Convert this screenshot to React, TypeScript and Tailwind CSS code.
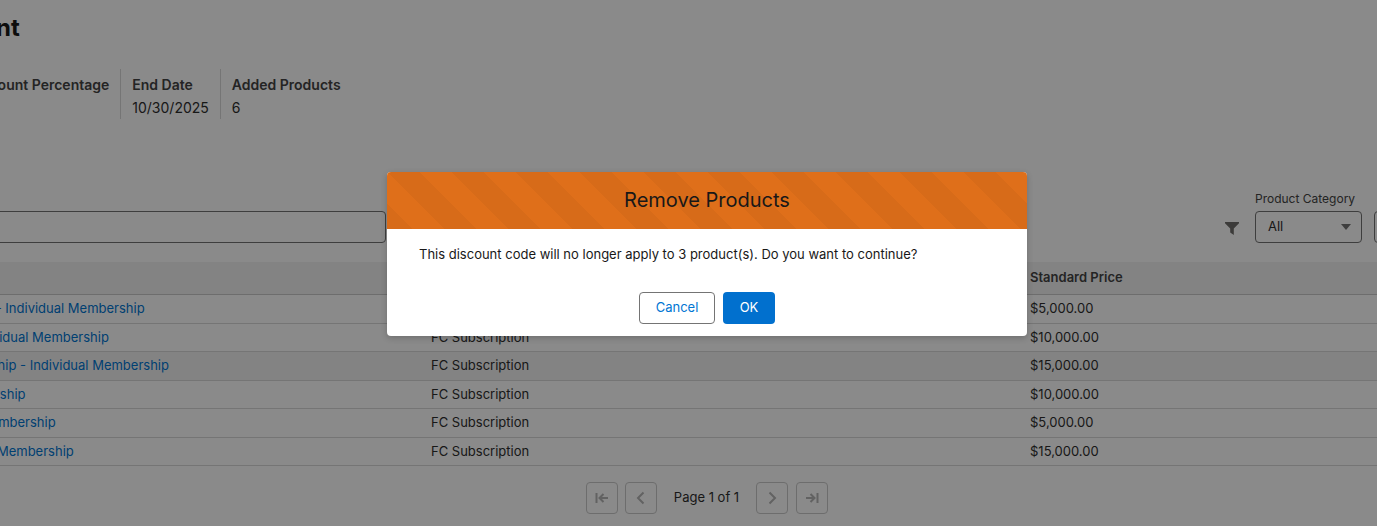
const rows = [
  ["Gold Membership - Individual Membership", "FC Subscription", "$5,000.00"],
  ["Bronze Plan - Individual Membership", "FC Subscription", "$10,000.00"],
  ["Platinum Membership - Individual Membership", "FC Subscription", "$15,000.00"],
  ["Corporate Membership", "FC Subscription", "$10,000.00"],
  ["Small Business Membership", "FC Subscription", "$5,000.00"],
  ["Trade Association Membership", "FC Subscription", "$15,000.00"],
];

function Stat({ label, value, last }: { label: string; value: string; last?: boolean }) {
  return (
    <div className={`flex h-[50px] flex-col gap-[3px] px-[11px] pt-[6px] ${last ? "" : "border-r border-[#d8d8d8]"}`}>
      <div className="text-[14px] leading-[20px] font-semibold whitespace-nowrap text-[#444444]">{label}</div>
      <div className="text-[14px] leading-[20px] whitespace-nowrap text-[#2e2e2e]">{value}</div>
    </div>
  );
}

function PageBtn({ children, className = "" }: { children: React.ReactNode; className?: string }) {
  return (
    <div className={`flex h-8 w-8 items-center justify-center rounded-[4px] border border-[#c9c9c9] text-[#b5b5b5] ${className}`}>
      {children}
    </div>
  );
}

export default function App() {
  return (
    <div className="relative h-[526px] w-full overflow-hidden bg-white font-['Inter',sans-serif] text-[13px] text-[#2e2e2e]">
      <div className="ml-[-120px] w-[1620px]">
        <div className="pt-[12px] pl-[35px] text-[24px] leading-[32px] font-bold text-[#181818]">Discount</div>
        <div className="mt-[25px] flex pl-[77px]">
          <Stat label="Discount Percentage" value="10%" />
          <Stat label="End Date" value="10/30/2025" />
          <Stat label="Added Products" value="6" last />
        </div>

        <div className="relative mt-[69px] flex h-[56px] items-end">
          <div className="mb-[1px] ml-[20px] h-8 w-[486px] rounded-[4px] border border-[#747474]"></div>
          <svg viewBox="0 0 16 16" className="mb-[8px] ml-[838px] h-4 w-4 text-[#706e6b]" fill="currentColor">
            <path d="M1 2h14v1.2L9.8 8.6V15L6.2 12.6V8.6L1 3.2z" />
          </svg>
          <div className="ml-[15px] flex w-[107px] flex-col">
            <div className="mb-[4px] text-[12px] leading-[16px] whitespace-nowrap text-[#444444]">Product Category</div>
            <div className="mb-[1px] flex h-[32px] items-center justify-between rounded-[4px] border border-[#747474] pr-[10px] pl-[12px]">
              <span>All</span>
              <svg viewBox="0 0 10 6" className="h-[6px] w-[10px] text-[#747474]" fill="currentColor">
                <path d="M0 0h10L5 6z" />
              </svg>
            </div>
          </div>
          <div className="mb-[1px] ml-[12px] h-[32px] w-[40px] rounded-[4px] border border-[#747474]"></div>
        </div>

        <div className="mt-[18px] grid h-[33px] grid-cols-[551px_599px_1fr] items-center border-b border-[#c9c9c9] bg-[#f3f3f3] font-semibold text-[#444444]">
          <div className="pl-[3px]">Product Name</div>
          <div>Product Family</div>
          <div>Standard Price</div>
        </div>
        {rows.map((r, i) => (
          <div
            key={i}
            className={`grid h-[28.5px] grid-cols-[551px_599px_1fr] items-center border-b border-[#d8d8d8] ${i === 2 ? "bg-[#f3f3f3]" : ""}`}
          >
            <div className="pl-[3px] whitespace-nowrap text-[#0176d3]">{r[0]}</div>
            <div>{r[1]}</div>
            <div>{r[2]}</div>
          </div>
        ))}

        <div className="mt-[16px] ml-[706px] flex items-center">
          <PageBtn>
            <svg viewBox="0 0 16 16" className="h-4 w-4" fill="none" stroke="currentColor" strokeWidth="2">
              <path d="M2.5 3v10M14 8H6M9.5 4L5.5 8l4 4" />
            </svg>
          </PageBtn>
          <PageBtn className="ml-[7px]">
            <svg viewBox="0 0 16 16" className="h-4 w-4" fill="none" stroke="currentColor" strokeWidth="2">
              <path d="M10.5 2.5L5 8l5.5 5.5" />
            </svg>
          </PageBtn>
          <div className="w-[99px] text-center">Page 1 of 1</div>
          <PageBtn>
            <svg viewBox="0 0 16 16" className="h-4 w-4" fill="none" stroke="currentColor" strokeWidth="2">
              <path d="M5.5 2.5L11 8l-5.5 5.5" />
            </svg>
          </PageBtn>
          <PageBtn className="ml-[8px]">
            <svg viewBox="0 0 16 16" className="h-4 w-4" fill="none" stroke="currentColor" strokeWidth="2">
              <path d="M13.5 3v10M2 8h8M6.5 4l4 4-4 4" />
            </svg>
          </PageBtn>
        </div>
      </div>

      <div className="absolute inset-0 bg-[rgba(0,0,0,0.46)]"></div>

      <div className="absolute top-[172px] left-[387px] w-[640px] overflow-hidden rounded-[4px] bg-white shadow-[0_2px_6px_rgba(0,0,0,0.2)]">
        <div className="flex h-[57px] items-center justify-center bg-[#df6f1a] bg-[linear-gradient(45deg,rgba(0,0,0,0.035)_25%,transparent_25%,transparent_50%,rgba(0,0,0,0.035)_50%,rgba(0,0,0,0.035)_75%,transparent_75%,transparent)] bg-[length:64px_64px] text-[20px] leading-[25px] text-[#181818]">
          Remove Products
        </div>
        <div className="h-[50px] px-8 pt-4 text-[13px] leading-[19px] text-[#181818]">
          This discount code will no longer apply to 3 product(s). Do you want to continue?
        </div>
        <div className="flex h-[57px] justify-center gap-2 pt-[13px]">
          <div className="flex h-8 w-[76px] items-center justify-center rounded-[4px] border border-[#747474] text-[#0176d3]">Cancel</div>
          <div className="flex h-8 w-[52px] items-center justify-center rounded-[4px] bg-[#0170ce] text-white">OK</div>
        </div>
      </div>
    </div>
  );
}
